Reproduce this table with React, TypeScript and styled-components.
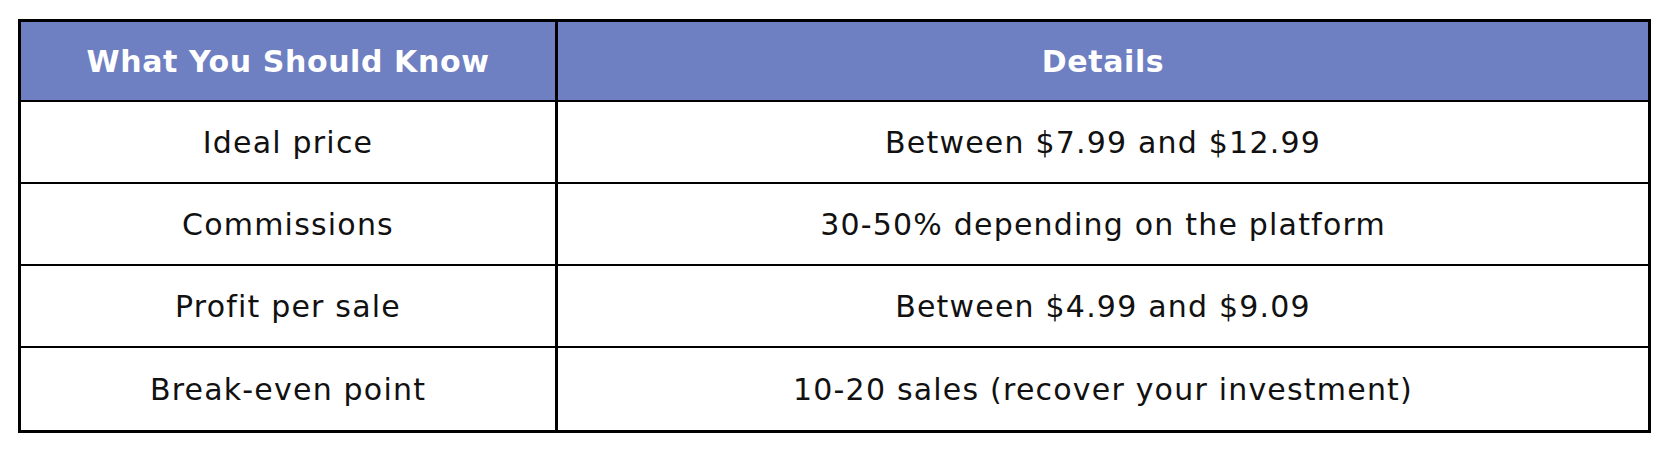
import styled, { createGlobalStyle } from 'styled-components';

const GlobalStyle = createGlobalStyle`
  html, body {
    margin: 0;
    padding: 0;
    background: #ffffff;
  }
`;

const Page = styled.div`
  padding: 19px 0 0 18px;
  font-family: 'DejaVu Sans', 'Open Sans', sans-serif;
`;

const Table = styled.div`
  display: flex;
  flex-direction: column;
  width: 1633px;
  border: 3px solid #000000;
  box-sizing: border-box;
`;

const Row = styled.div<{ $header?: boolean }>`
  display: grid;
  grid-template-columns: 537px 1fr;
  height: ${({ $header }) => ($header ? '80px' : '82px')};
  box-sizing: border-box;
  border-bottom: 2px solid #000000;
  background-color: ${({ $header }) => ($header ? '#6E7FC2' : '#ffffff')};

  &:last-child {
    border-bottom: none;
  }
`;

const Cell = styled.div<{ $header?: boolean }>`
  display: flex;
  align-items: center;
  justify-content: center;
  box-sizing: border-box;
  color: ${({ $header }) => ($header ? '#ffffff' : '#111111')};
  font-size: 30px;
  font-weight: ${({ $header }) => ($header ? 700 : 400)};
  letter-spacing: ${({ $header }) => ($header ? '0.6px' : '1.2px')};

  &:first-child {
    border-right: 3px solid #000000;
  }
`;

const rows = [
  ['Ideal price', 'Between $7.99 and $12.99'],
  ['Commissions', '30-50% depending on the platform'],
  ['Profit per sale', 'Between $4.99 and $9.09'],
  ['Break-even point', '10-20 sales (recover your investment)'],
];

export default function App() {
  return (
    <>
      <GlobalStyle />
      <Page>
        <Table>
          <Row $header>
            <Cell $header>What You Should Know</Cell>
            <Cell $header>Details</Cell>
          </Row>
          {rows.map(([label, detail]) => (
            <Row key={label}>
              <Cell>{label}</Cell>
              <Cell>{detail}</Cell>
            </Row>
          ))}
        </Table>
      </Page>
    </>
  );
}
